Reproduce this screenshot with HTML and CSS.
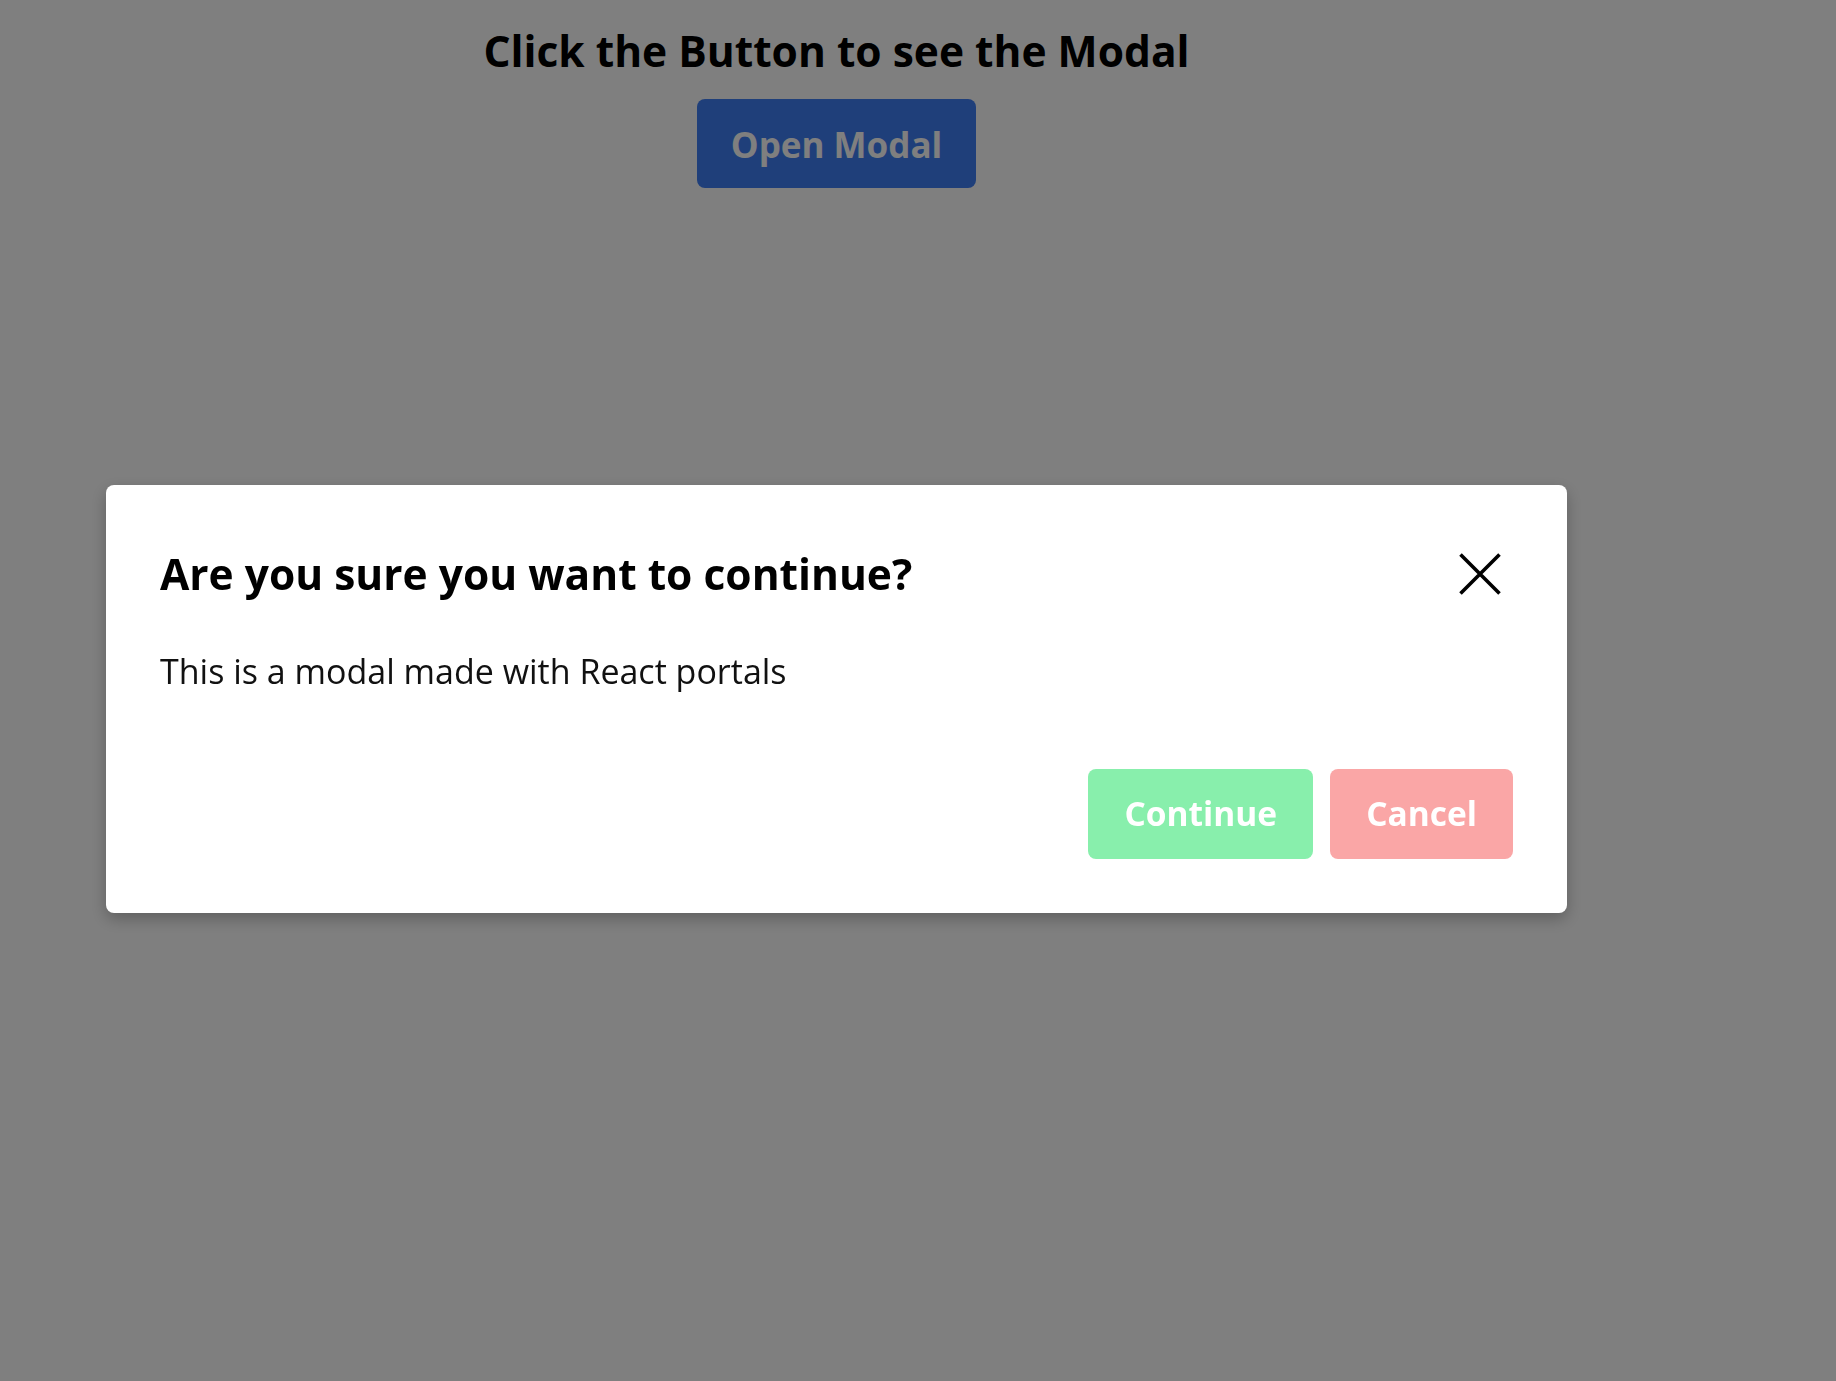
FILE: index.html
```html
<!DOCTYPE html>
<html lang="en">
<head>
<meta charset="utf-8">
<title>Modal</title>
<link rel="stylesheet" href="styles.css">
</head>
<body>
<div class="app">
  <h1 class="title">Click the Button to see the Modal</h1>
  <button class="open-btn">Open Modal</button>
</div>
<div class="overlay">
  <div class="modal">
    <div class="modal-header">
      <h2 class="modal-title">Are you sure you want to continue?</h2>
      <button class="close-btn" aria-label="Close">
        <svg width="42" height="42" viewBox="0 0 42 42"><path d="M1.5 1.5 L40.5 40.5 M40.5 1.5 L1.5 40.5" stroke="#000" stroke-width="3.6" fill="none"/></svg>
      </button>
    </div>
    <p class="modal-body">This is a modal made with React portals</p>
    <div class="modal-actions">
      <button class="btn btn-continue">Continue</button>
      <button class="btn btn-cancel">Cancel</button>
    </div>
  </div>
</div>
</body>
</html>
```
FILE: styles.css
```css
html, body {
  margin: 0;
  padding: 0;
  background: #ffffff;
  font-family: "Open Sans", "Noto Sans", sans-serif;
}

.app {
  width: 1673px;
  display: flex;
  flex-direction: column;
  align-items: center;
}

.title {
  margin: 22px 0 0;
  font-size: 42.5px;
  line-height: 58px;
  font-weight: 700;
  color: #000;
}

.open-btn {
  margin-top: 19px;
  padding: 22px 34px 20px;
  font-family: inherit;
  font-size: 35px;
  line-height: 47px;
  font-weight: 700;
  color: #fff;
  background: #3e7ef4;
  border: none;
  border-radius: 8px;
}

.overlay {
  position: fixed;
  inset: 0;
  background: rgba(0, 0, 0, 0.5);
}

.modal {
  position: absolute;
  left: 106px;
  top: 485px;
  width: 1461px;
  box-sizing: border-box;
  padding: 60px 54px 54px;
  background: #fff;
  border-radius: 8px;
  box-shadow: 0 6px 16px rgba(0, 0, 0, 0.25);
}

.modal-header {
  display: flex;
  align-items: center;
  justify-content: space-between;
}

.modal-title {
  margin: 0;
  font-size: 42.5px;
  line-height: 58px;
  font-weight: 700;
  color: #000;
}

.close-btn {
  margin-right: 12px;
  padding: 0;
  width: 42px;
  height: 42px;
  border: none;
  background: transparent;
  display: flex;
}

.modal-body {
  margin: 45px 0 0;
  font-size: 34px;
  line-height: 46px;
  font-weight: 400;
  color: #111;
}

.modal-actions {
  margin-top: 75px;
  display: flex;
  justify-content: flex-end;
  gap: 17px;
}

.btn {
  padding: 22px 36px 23px;
  font-family: inherit;
  font-size: 33.5px;
  line-height: 45px;
  font-weight: 700;
  color: #fff;
  border: none;
  border-radius: 8px;
}

.btn-continue {
  background: #88efac;
}

.btn-cancel {
  background: #faa6a6;
}
```
